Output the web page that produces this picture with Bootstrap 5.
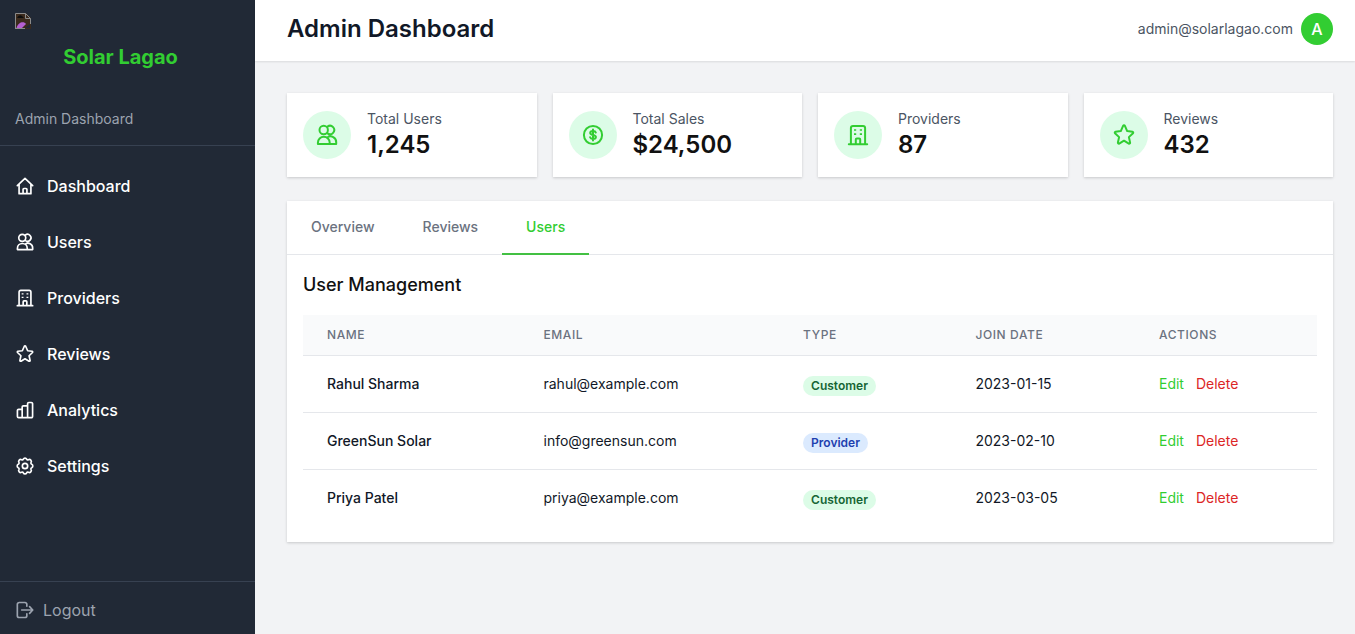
<!DOCTYPE html>
<html lang="en">
<head>
<meta charset="utf-8">
<meta name="viewport" content="width=device-width, initial-scale=1">
<title>Admin Dashboard</title>
<link rel="stylesheet" href="https://cdn.jsdelivr.net/npm/bootstrap@5.3.0/dist/css/bootstrap.min.css">
<style>
:root{--brand:#32cd32;--side:#212936;--line:#e5e7eb}
body{font-family:Inter,"Liberation Sans",sans-serif;background:#f2f3f5;color:#111827;line-height:24px}
a{text-decoration:none}
.sidebar{width:255px;background:var(--side);line-height:24px}
.side-head{padding:13px 15px 14px;border-bottom:1px solid #374151}
.side-head svg{display:block}
.brand-name{font-size:20px;line-height:28px;font-weight:700;color:var(--brand);margin:14px 14px 36px 0;text-align:center}
.side-sub{font-size:14px;line-height:24px;color:#9ca3af;margin:0}
.side-menu{padding:20px 0;gap:16px}
.side-menu a{display:flex;align-items:center;gap:12px;padding:8px 15px;color:#fff;font-weight:500}
.side-foot{border-top:1px solid #374151;padding:16px 15px 12px}
.side-foot button{display:flex;align-items:center;gap:8px;padding:0;border:0;background:none;color:#9ca3af}
.ico{width:20px;height:20px;fill:none;stroke:currentColor;stroke-width:2;stroke-linecap:round;stroke-linejoin:round;flex:none}
.topbar{background:#fff;padding:13px 22px 16px 32px;box-shadow:0 1px 2px rgba(0,0,0,.1)}
.topbar h1{font-size:24px;line-height:32px;font-weight:600}
.mail{font-size:14px;line-height:20px;color:#4b5563}
.avatar{width:32px;height:32px;background:var(--brand);color:#fff;font-weight:500}
.page-body{padding:32px 22px 32px 32px}
.panel{background:#fff;box-shadow:0 1px 3px rgba(0,0,0,.12),0 1px 2px rgba(0,0,0,.06)}
.stat{padding:16px;gap:16px}
.stat-icon{width:48px;height:48px;background:#dcfce7;color:var(--brand)}
.stat-icon .ico{width:24px;height:24px}
.stat-label{font-size:14px;line-height:20px;color:#4b5563}
.stat-value{font-size:24px;line-height:32px;font-weight:600;color:#111}
.tab-bar{box-shadow:inset 0 -1px var(--line)}
.tab-bar button{border:0;border-bottom:2px solid transparent;background:none;padding:16px 24px;font-size:14px;line-height:20px;font-weight:500;color:#6b7280}
.tab-bar button.active{color:var(--brand);border-color:#43c043}
.panel h2{font-size:18px;line-height:28px;font-weight:500;margin-bottom:16px;color:#111}
.users-table{width:100%;table-layout:fixed;font-size:14px}
.users-table th{background:#f9fafb;font-size:12px;line-height:16px;font-weight:500;letter-spacing:.05em;color:#6b7280;text-transform:uppercase;padding:12px 24px}
.users-table td{padding:16px 24px;line-height:24px}
.users-table thead tr,.users-table tbody tr:not(:last-child){border-bottom:1px solid var(--line)}
.kind{display:inline-block;vertical-align:bottom;border-radius:10px;padding:0 8px;font-size:12px;line-height:20px;font-weight:600}
.kind-customer{background:#dcfce7;color:#166534}
.kind-provider{background:#dbeafe;color:#1e40af}
.act{border:0;background:none;padding:0;line-height:20px}
.act-edit{color:var(--brand);margin-right:12px}
.act-delete{color:#dc2626}
</style>
</head>
<body>
<svg class="d-none" aria-hidden="true">
  <symbol id="i-home" viewBox="0 0 24 24"><path d="M2.8 11.6 12 2.9l9.200 8.700M4.900 10V21.200h14.200V10M9.700 21v-5a1 1 0 0 1 1-1h2.600a1 1 0 0 1 1 1v5"/></symbol>
  <symbol id="i-users" viewBox="0 0 24 24"><circle cx="8.700" cy="7" r="4.200"/><path d="M12.500 3.600a4.200 4.200 0 1 1 0 6.800M2.900 21.100v-1.400a5.900 5.900 0 0 1 11.800 0v1.400zM12.300 14.500a5.600 5.600 0 0 1 8.900 4.700v1.900h-6.500"/></symbol>
  <symbol id="i-building" viewBox="0 0 24 24"><path d="M2.800 21.200h18.400M4.900 21V5a2.100 2.100 0 0 1 2.100-2.100h10A2.100 2.100 0 0 1 19.100 5v16M9.800 21v-4.600a1 1 0 0 1 1-1h2.400a1 1 0 0 1 1 1V21"/><path stroke-width="1.700" stroke-linecap="butt" d="M8 7h2.200M13.800 7H16M8 11.200h2.200M13.800 11.200H16"/></symbol>
  <symbol id="i-star" viewBox="0 0 24 24"><path d="M11.200 2.700a.9.900 0 0 1 1.600 0l2.400 5.400 5.300.6a.9.900 0 0 1 .5 1.500l-4.100 3.900 1.200 5.500a.9.900 0 0 1-1.300 1L12 17.700l-4.800 2.900a.9.900 0 0 1-1.300-1l1.200-5.500L3 10.200a.9.900 0 0 1 .5-1.500l5.300-.6z"/></symbol>
  <symbol id="i-chart" viewBox="0 0 24 24"><path d="M8.600 21.200H4.400a1.500 1.500 0 0 1-1.500-1.500v-7a1.500 1.500 0 0 1 1.500-1.500h4.200zM8.600 21.200V8.500A1.500 1.500 0 0 1 10.100 7h5v14.200zM15.100 21.200V4.500a1.500 1.500 0 0 1 1.500-1.500h3a1.500 1.500 0 0 1 1.500 1.500v15.200a1.500 1.500 0 0 1-1.500 1.500z"/></symbol>
  <symbol id="i-gear" viewBox="0 0 24 24"><circle cx="12" cy="12" r="3.200"/><path d="M10 3.800a2.200 2.200 0 0 1 4 0c.4.900 1.100 1.100 2 .8a2.300 2.300 0 0 1 3.200 3.200c-.3.900-.1 1.800.9 2.200a2.200 2.200 0 0 1 0 4c-1 .4-1.200 1.300-.9 2.200a2.300 2.300 0 0 1-3.200 3.200c-.9-.3-1.600-.1-2 .8a2.200 2.200 0 0 1-4 0c-.4-.9-1.100-1.100-2-.8a2.300 2.300 0 0 1-3.200-3.200c.3-.9.100-1.800-.9-2.200a2.200 2.200 0 0 1 0-4c1-.4 1.200-1.300.9-2.200A2.300 2.300 0 0 1 8 4.600c.9.300 1.600.1 2-.8z"/></symbol>
  <symbol id="i-coin" viewBox="0 0 24 24"><circle cx="12" cy="12" r="9.100"/><path d="M14.800 9.600c-.3-1-1.400-1.500-2.800-1.500-1.700 0-2.800.7-2.800 1.900 0 2.800 5.700 1.200 5.700 4 0 1.200-1.200 1.900-2.900 1.900-1.500 0-2.600-.6-2.900-1.600M12 6.500v11"/></symbol>
  <symbol id="i-exit" viewBox="0 0 24 24"><path d="M14.200 7.500V5.200A2.200 2.200 0 0 0 12 3H5a2.200 2.200 0 0 0-2.200 2.200v13.600A2.200 2.200 0 0 0 5 21h7a2.200 2.200 0 0 0 2.200-2.200v-2.300M8 12h13M17.500 8l3.800 4-3.800 4"/></symbol>
</svg>
<div class="d-flex min-vh-100">
  <aside class="sidebar d-flex flex-column flex-shrink-0">
    <div class="side-head">
      <svg width="16" height="16" viewBox="0 0 16 16" role="img" aria-label="Logo"><path d="M0 0h11l5 5v11H0z" fill="#3b2a1d"/><path d="M2 5q2-4 5-2l2 2z" fill="#0d0d0d"/><path d="M1.500 15C3 9 9 8 11 11l-4 4z" fill="#b45fd0"/><path d="M10 15l5-4v4z" fill="#212936"/><path d="M.5 16V.5h10l5 5V11M10.500.5v5h5M0 15.500h10" fill="none" stroke="#8b8b8b"/></svg>
      <p class="brand-name">Solar Lagao</p>
      <p class="side-sub">Admin Dashboard</p>
    </div>
    <nav class="side-menu d-flex flex-column flex-grow-1">
      <a href="#"><svg class="ico"><use href="#i-home"/></svg>Dashboard</a>
      <a href="#"><svg class="ico"><use href="#i-users"/></svg>Users</a>
      <a href="#"><svg class="ico"><use href="#i-building"/></svg>Providers</a>
      <a href="#"><svg class="ico"><use href="#i-star"/></svg>Reviews</a>
      <a href="#"><svg class="ico"><use href="#i-chart"/></svg>Analytics</a>
      <a href="#"><svg class="ico"><use href="#i-gear"/></svg>Settings</a>
    </nav>
    <div class="side-foot"><button type="button"><svg class="ico"><use href="#i-exit"/></svg>Logout</button></div>
  </aside>
  <div class="flex-grow-1">
    <header class="topbar d-flex justify-content-between align-items-center">
      <h1 class="mb-0">Admin Dashboard</h1>
      <div class="d-flex align-items-center gap-2">
        <span class="mail">admin@solarlagao.com</span>
        <span class="avatar rounded-circle d-flex align-items-center justify-content-center">A</span>
      </div>
    </header>
    <main class="page-body">
      <div class="row row-cols-2 row-cols-lg-4 g-3 mb-4">
        <div class="col"><div class="panel stat d-flex align-items-center">
          <span class="stat-icon rounded-circle d-flex align-items-center justify-content-center"><svg class="ico"><use href="#i-users"/></svg></span>
          <div><div class="stat-label">Total Users</div><div class="stat-value">1,245</div></div>
        </div></div>
        <div class="col"><div class="panel stat d-flex align-items-center">
          <span class="stat-icon rounded-circle d-flex align-items-center justify-content-center"><svg class="ico"><use href="#i-coin"/></svg></span>
          <div><div class="stat-label">Total Sales</div><div class="stat-value">$24,500</div></div>
        </div></div>
        <div class="col"><div class="panel stat d-flex align-items-center">
          <span class="stat-icon rounded-circle d-flex align-items-center justify-content-center"><svg class="ico"><use href="#i-building"/></svg></span>
          <div><div class="stat-label">Providers</div><div class="stat-value">87</div></div>
        </div></div>
        <div class="col"><div class="panel stat d-flex align-items-center">
          <span class="stat-icon rounded-circle d-flex align-items-center justify-content-center"><svg class="ico"><use href="#i-star"/></svg></span>
          <div><div class="stat-label">Reviews</div><div class="stat-value">432</div></div>
        </div></div>
      </div>
      <section class="panel">
        <div class="tab-bar d-flex" role="tablist">
          <button type="button" role="tab">Overview</button>
          <button type="button" role="tab">Reviews</button>
          <button type="button" role="tab" class="active" aria-selected="true">Users</button>
        </div>
        <div class="p-3">
          <h2>User Management</h2>
          <table class="users-table">
            <colgroup><col style="width:21.35%"><col style="width:25.6%"><col style="width:17%"><col style="width:18.1%"><col style="width:17.95%"></colgroup>
            <thead><tr><th>Name</th><th>Email</th><th>Type</th><th>Join Date</th><th>Actions</th></tr></thead>
            <tbody>
              <tr><td class="fw-medium">Rahul Sharma</td><td>rahul@example.com</td><td><span class="kind kind-customer">Customer</span></td><td>2023-01-15</td><td><button type="button" class="act act-edit">Edit</button><button type="button" class="act act-delete">Delete</button></td></tr>
              <tr><td class="fw-medium">GreenSun Solar</td><td>info@greensun.com</td><td><span class="kind kind-provider">Provider</span></td><td>2023-02-10</td><td><button type="button" class="act act-edit">Edit</button><button type="button" class="act act-delete">Delete</button></td></tr>
              <tr><td class="fw-medium">Priya Patel</td><td>priya@example.com</td><td><span class="kind kind-customer">Customer</span></td><td>2023-03-05</td><td><button type="button" class="act act-edit">Edit</button><button type="button" class="act act-delete">Delete</button></td></tr>
            </tbody>
          </table>
        </div>
      </section>
    </main>
  </div>
</div>
<script src="https://cdn.jsdelivr.net/npm/bootstrap@5.3.0/dist/js/bootstrap.bundle.min.js"></script>
</body>
</html>
